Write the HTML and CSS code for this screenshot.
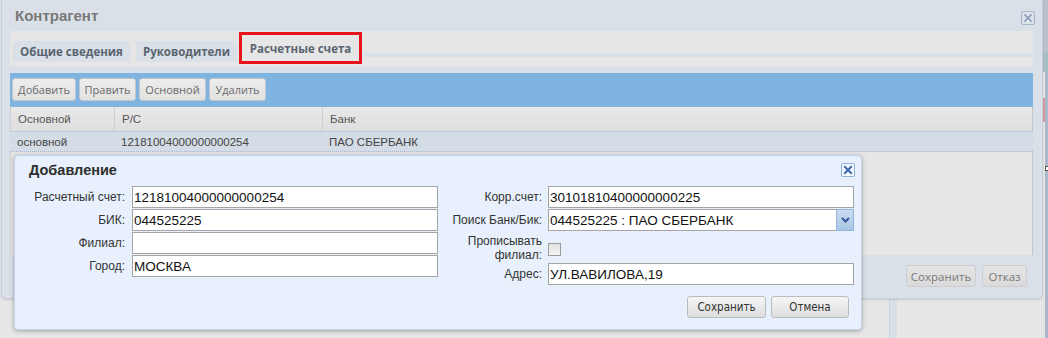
FILE: index.html
```html
<!DOCTYPE html>
<html lang="ru">
<head>
<meta charset="utf-8">
<title>Контрагент</title>
<link rel="stylesheet" href="styles.css">
</head>
<body>
<div class="bg-divider"></div>
<div class="bg-edge">
  <span class="edge-teal"></span>
  <span class="edge-red"></span>
  <span class="edge-sq"></span>
</div>

<div class="win">
  <div class="win-head">
    <span class="win-title">Контрагент</span>
    <span class="x-btn x-gray">
      <svg width="12" height="12" viewBox="0 0 12 12"><path d="M3 3 L9 9 M9 3 L3 9" stroke="#8d9bbd" stroke-width="1.7" fill="none" stroke-linecap="square"/></svg>
    </span>
  </div>
  <div class="tabs">
    <div class="tab">Общие сведения</div>
    <div class="tab tab2">Руководители</div>
    <div class="tab active">Расчетные счета</div>
    <div class="tab-line"></div>
  </div>
  <div class="grid-panel">
    <div class="toolbar">
      <button class="tb w1">Добавить</button>
      <button class="tb w2">Править</button>
      <button class="tb w3">Основной</button>
      <button class="tb w4">Удалить</button>
    </div>
    <div class="grid-head">
      <div class="col c1">Основной</div>
      <div class="col c2">Р/С</div>
      <div class="col c3">Банк</div>
    </div>
    <div class="grid-row">
      <div class="col c1">основной</div>
      <div class="col c2">12181004000000000254</div>
      <div class="col c3">ПАО СБЕРБАНК</div>
    </div>
    <div class="grid-body"></div>
  </div>
  <div class="win-foot">
    <button class="fb fb-save">Сохранить</button>
    <button class="fb fb-cancel">Отказ</button>
  </div>
</div>

<div class="dlg">
  <div class="dlg-head">
    <span class="dlg-title">Добавление</span>
    <span class="x-btn x-blue">
      <svg width="12" height="12" viewBox="0 0 12 12"><path d="M3 3 L9 9 M9 3 L3 9" stroke="#3a67b0" stroke-width="2" fill="none" stroke-linecap="square"/></svg>
    </span>
  </div>
  <div class="dlg-body">
    <div class="form-col left">
      <div class="frow"><label class="lbl">Расчетный счет:</label><div class="inp">12181004000000000254</div></div>
      <div class="frow"><label class="lbl">БИК:</label><div class="inp">044525225</div></div>
      <div class="frow"><label class="lbl">Филиал:</label><div class="inp"></div></div>
      <div class="frow"><label class="lbl">Город:</label><div class="inp">МОСКВА</div></div>
    </div>
    <div class="form-col right">
      <div class="frow"><label class="lbl">Корр.счет:</label><div class="inp">30101810400000000225</div></div>
      <div class="frow"><label class="lbl">Поиск Банк/Бик:</label>
        <div class="inp combo"><span class="combo-text">044525225 : ПАО СБЕРБАНК</span>
          <span class="trigger"><svg width="9" height="6" viewBox="0 0 9 6"><path d="M1 1 L4.5 4.5 L8 1" stroke="#34599a" stroke-width="2" fill="none"/></svg></span>
        </div>
      </div>
      <div class="frow chk-row"><label class="lbl lbl2">Прописывать<br>филиал:</label><span class="chk"></span></div>
      <div class="frow"><label class="lbl">Адрес:</label><div class="inp">УЛ.ВАВИЛОВА,19</div></div>
    </div>
  </div>
  <div class="dlg-foot">
    <button class="db db-save">Сохранить</button>
    <button class="db db-cancel">Отмена</button>
  </div>
</div>
</body>
</html>
```

FILE: styles.css
```css
* { box-sizing: border-box; }

body {
  margin: 0;
  width: 1048px;
  height: 338px;
  overflow: hidden;
  position: relative;
  background: #e6e6e6;
  font-family: "Liberation Sans", Arial, sans-serif;
  color: #333;
}

button {
  font: inherit;
  margin: 0;
  padding: 0;
  cursor: default;
}

/* background page pieces */
.bg-divider {
  position: absolute;
  left: 889px;
  top: 0;
  width: 8px;
  height: 338px;
  background: #d8dfe8;
  border-left: 1px solid #c9d1db;
}

.bg-edge {
  position: absolute;
  left: 1042px;
  top: 0;
  width: 6px;
  height: 338px;
  background: linear-gradient(to right, #e6e6e6 0 3px, #aab6c9 3px);
}
.edge-teal {
  position: absolute;
  left: 0;
  top: 0;
  width: 6px;
  height: 72px;
  background: linear-gradient(to bottom, #b9c2cf 0 52px, #a6bfc2 52px);
}
.edge-red {
  position: absolute;
  left: 0;
  top: 98px;
  width: 3px;
  height: 24px;
  background: #d59a9d;
}
.edge-sq {
  position: absolute;
  left: 3px;
  top: 166px;
  width: 4px;
  height: 5px;
  background: #fff;
  border: 1px solid #555;
}

/* outer window */
.win {
  position: absolute;
  left: 1px;
  top: -4px;
  width: 1042px;
  height: 303px;
  background: #dae0e7;
  border: 1px solid #c8cfd8;
  border-radius: 5px;
  box-shadow: 0 1px 2px rgba(0, 0, 0, 0.12);
  display: flex;
  flex-direction: column;
}

.win-head {
  height: 34px;
  flex: none;
  display: flex;
  align-items: center;
  justify-content: space-between;
  padding: 0 7px 0 13px;
}
.win-title {
  font-weight: bold;
  font-size: 15px;
  color: #787878;
  padding-top: 3px;
}

.x-btn {
  width: 14px;
  height: 14px;
  border-radius: 2px;
  display: flex;
  align-items: center;
  justify-content: center;
}
.x-gray {
  border: 1px solid #aab5cb;
  margin-top: 7px;
  background: #dde3ea;
}
.x-blue {
  border: 1px solid #92b1df;
  background: #f2f7fe;
}

/* tabs */
.tabs {
  height: 35px;
  flex: none;
  margin: 0 9px 0 8px;
  background: #e6e6e6;
  display: flex;
  align-items: flex-start;
  padding-left: 3px;
}
.tab {
  font-family: "Open Sans", "Liberation Sans", sans-serif;
  font-weight: bold;
  font-size: 11.5px;
  color: #5b6571;
  height: 21px;
  margin-top: 10px;
  width: 117px;
  background: #d9e0e8;
  border-radius: 4px 4px 0 0;
  display: flex;
  align-items: center;
  justify-content: center;
}
.tab2 {
  width: 101px;
  margin-left: 6px;
}
.tab.active {
  width: 123px;
  height: 32px;
  margin-top: 1px;
  margin-left: 2px;
  background: #e6e6e6;
  border: 3px solid #e8141c;
  border-radius: 0;
  padding-top: 1px;
}
.tab-line {
  flex: 1;
  height: 4px;
  margin-top: 22px;
  background: #dae0e7;
}

/* grid panel */
.grid-panel {
  height: 182px;
  flex: none;
  margin: 7px 9px 0 8px;
  display: flex;
  flex-direction: column;
}
.toolbar {
  height: 34px;
  flex: none;
  background: #80b4e0;
  display: flex;
  align-items: flex-start;
  gap: 3px;
  padding: 5px 0 0 2px;
}
.tb {
  height: 23px;
  border: 1px solid #c3c6ca;
  border-radius: 3px;
  background: linear-gradient(#ececec, #e2e2e2);
  font-family: "Open Sans", "Liberation Sans", sans-serif;
  font-size: 11px;
  color: #6a6a6a;
}
.w1 { width: 64px; }
.w2 { width: 57px; }
.w3 { width: 67px; }
.w4 { width: 57px; }

.grid-head {
  height: 24px;
  flex: none;
  display: flex;
  background: linear-gradient(#e9e9e9, #dedede);
  border-left: 1px solid #cfcfcf;
  border-right: 1px solid #c6c6c6;
  font-size: 11.5px;
  color: #555;
}
.col {
  display: flex;
  align-items: center;
  padding-left: 7px;
}
.c1 { width: 104px; }
.c2 { width: 208px; }
.c3 { flex: 1; }
.grid-head .c1, .grid-head .c2 { border-right: 1px solid #cfcfcf; }

.grid-row {
  height: 21px;
  flex: none;
  display: flex;
  background: #d4dce6;
  border-top: 1px dotted #a9bbd2;
  border-bottom: 1px dotted #a9bbd2;
  font-size: 11.5px;
  color: #444;
}
.grid-body {
  flex: 1;
  background: #e6e6e6;
  border-left: 1px solid #cfcfcf;
  border-right: 1px solid #c6c6c6;
}

.win-foot {
  flex: 1;
  display: flex;
  justify-content: flex-end;
  align-items: flex-start;
  gap: 6px;
  padding: 10px 15px 0 0;
}
.fb {
  height: 22px;
  border: 1px solid #cbcdd0;
  border-radius: 3px;
  background: linear-gradient(#e5e5e5, #dadada);
  font-family: "Open Sans", "Liberation Sans", sans-serif;
  font-size: 11.5px;
  color: #7a7a7a;
}
.fb-save { width: 70px; }
.fb-cancel { width: 45px; }

/* dialog */
.dlg {
  position: absolute;
  left: 14px;
  top: 155px;
  width: 848px;
  height: 175px;
  background: #e7f0fc;
  border: 1px solid #c3d3e8;
  border-radius: 4px;
  box-shadow: 0 1px 4px rgba(0, 0, 0, 0.3);
}
.dlg-head {
  height: 30px;
  display: flex;
  justify-content: space-between;
  align-items: flex-start;
  padding: 0 6px 0 14px;
}
.dlg-title {
  font-weight: bold;
  font-size: 14.5px;
  color: #2f2f2f;
  margin-top: 6px;
}
.dlg-head .x-btn { margin-top: 7px; }

.dlg-body {
  display: flex;
  align-items: flex-start;
}
.form-col {
  display: flex;
  flex-direction: column;
  gap: 1px;
}
.frow {
  display: flex;
  align-items: center;
  height: 22px;
}
.lbl {
  font-size: 12px;
  color: #333;
  text-align: right;
  flex: none;
}
.left .lbl { width: 110px; margin-right: 7px; }
.right .lbl { width: 104px; margin-right: 6px; }

.inp {
  width: 306px;
  height: 22px;
  background: #fff;
  border: 1px solid #a5a5a5;
  font-size: 13.5px;
  color: #111;
  padding: 0 2px 0 1px;
  display: flex;
  align-items: center;
  white-space: nowrap;
}
.combo {
  padding-right: 0;
  border-right: none;
}
.combo-text { flex: 1; }
.trigger {
  width: 18px;
  height: 22px;
  margin-top: -1px;
  margin-bottom: -1px;
  background: linear-gradient(#c9dcf1, #a9c5e6);
  border: 1px solid #97b4da;
  display: flex;
  align-items: center;
  justify-content: center;
}

.chk-row {
  height: 30px;
  align-items: flex-start;
}
.lbl2 {
  line-height: 14px;
  padding-top: 2px;
}
.chk {
  width: 13px;
  height: 13px;
  margin-top: 11px;
  border: 1px solid #9c9c9c;
  background: linear-gradient(#e2e2e2, #f4f4f4);
}

.dlg-foot {
  display: flex;
  justify-content: flex-end;
  gap: 5px;
  padding: 11px 12px 0 0;
}
.db {
  height: 22px;
  border: 1px solid #bcbcbc;
  border-radius: 3px;
  background: linear-gradient(#f6f6f6, #dedede);
  font-family: "DejaVu Sans Condensed", "Liberation Sans", sans-serif;
  font-size: 11.5px;
  color: #333;
}
.db-save { width: 79px; }
.db-cancel { width: 78px; }
```
